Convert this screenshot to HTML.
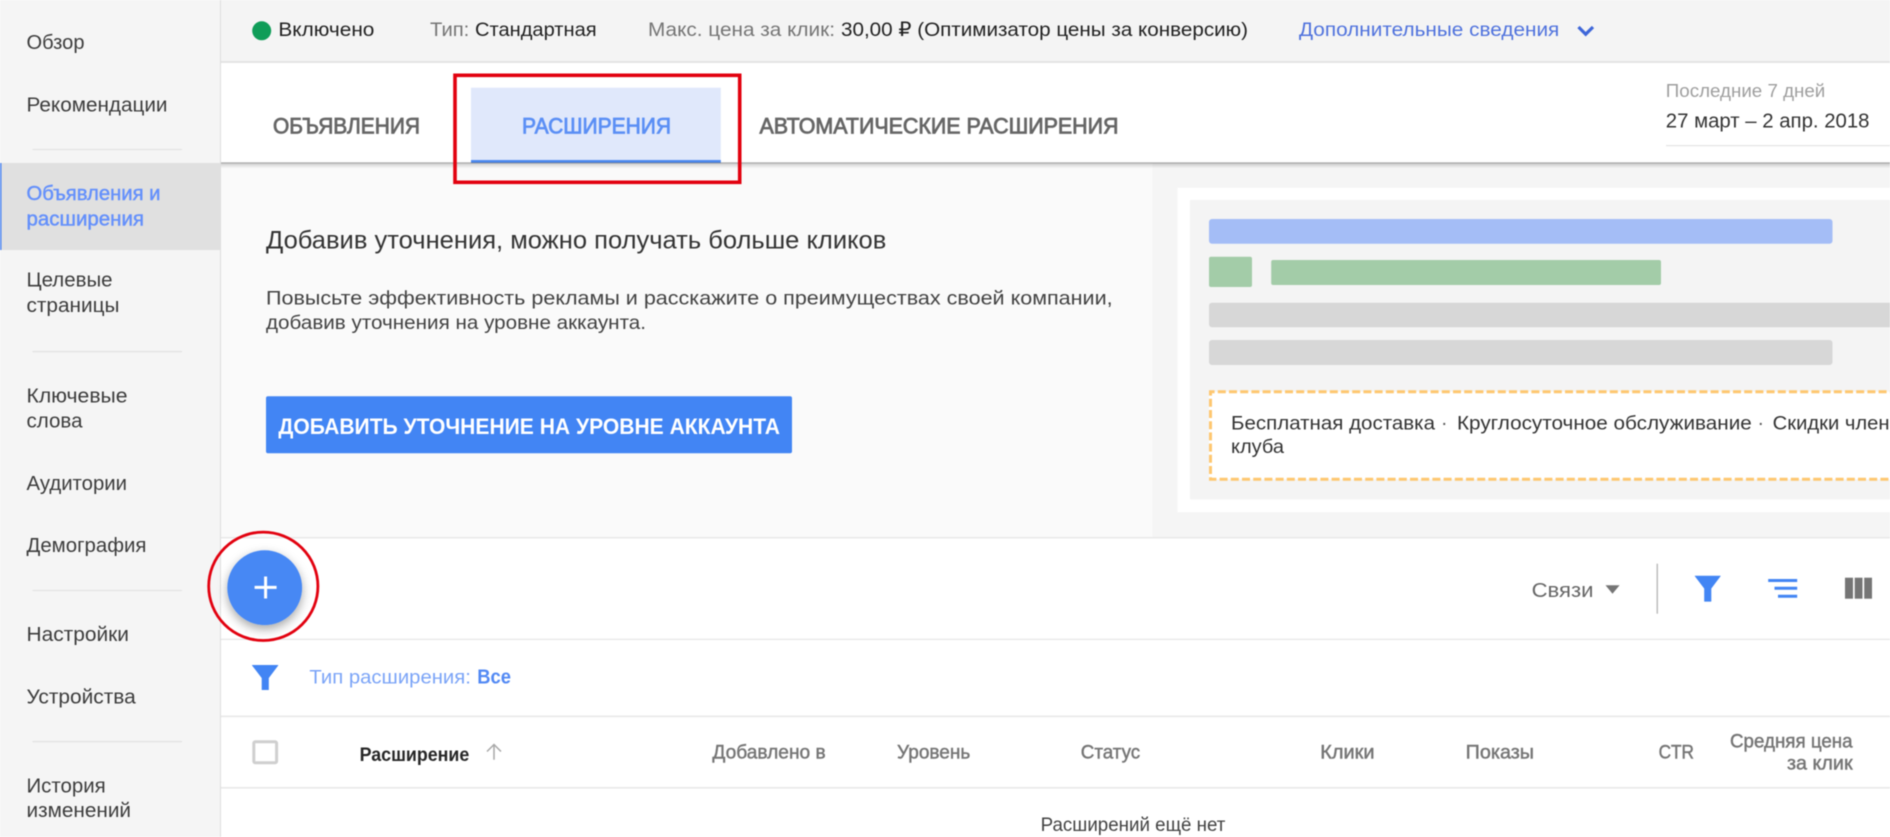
<!DOCTYPE html>
<html lang="ru">
<head>
<meta charset="utf-8">
<title>Расширения</title>
<style>
html,body{margin:0;padding:0;width:1890px;height:837px;overflow:hidden;background:#fff}
svg{display:block;filter:blur(.4px)}
text{font-family:"Liberation Sans","DejaVu Sans",sans-serif;font-size:19.5px;fill:#424242}
.m{stroke-width:.45px}
.nav{font-size:20px;fill:#3c3c3c}
.blue{fill:#6490fb;stroke:#6490fb}
.g{fill:#757575}
.d{fill:#212121}
.tab{font-size:22px;fill:#666;stroke:#666;stroke-width:.8px}
.th{fill:#757575;stroke:#757575}
</style>
</head>
<body>
<svg xmlns="http://www.w3.org/2000/svg" width="1890" height="837" viewBox="0 0 1890 837">
<defs>
<linearGradient id="sh" x1="0" y1="0" x2="0" y2="1"><stop offset="0" stop-color="#000" stop-opacity=".42"/><stop offset=".3" stop-color="#000" stop-opacity=".14"/><stop offset="1" stop-color="#000" stop-opacity="0"/></linearGradient>
<filter id="fab" x="-30%" y="-30%" width="160%" height="170%"><feDropShadow dx="0" dy="4" stdDeviation="5" flood-color="#000" flood-opacity=".35"/></filter>
</defs>

<!-- backgrounds -->
<rect x="0" y="0" width="1890" height="837" fill="#fff"/>
<rect x="0" y="0" width="220" height="837" fill="#f5f5f5"/>
<rect x="220" y="0" width="1" height="837" fill="#dedede"/>
<rect x="221" y="0" width="1669" height="62" fill="#f4f4f4"/>
<rect x="221" y="61" width="1669" height="2" fill="#e4e4e4"/>
<rect x="221" y="163" width="1669" height="375" fill="#fafafa"/>

<!-- sidebar -->
<rect x="0" y="163" width="220" height="87" fill="#e0e0e0"/>
<rect x="0" y="163" width="1.5" height="87" fill="#4d84f0"/>
<g fill="#e0e0e0">
<rect x="32.5" y="149" width="149.5" height="1"/>
<rect x="32.5" y="351" width="149.5" height="1.2"/>
<rect x="32.5" y="590" width="149.5" height="1"/>
<rect x="32.5" y="741" width="149.5" height="1.2"/>
</g>
<text class="nav" x="26.5" y="49" textLength="58" lengthAdjust="spacingAndGlyphs">Обзор</text>
<text class="nav" x="26.5" y="111.5" textLength="141" lengthAdjust="spacingAndGlyphs">Рекомендации</text>
<text class="nav blue m" x="26.5" y="200" textLength="134" lengthAdjust="spacingAndGlyphs">Объявления и</text>
<text class="nav blue m" x="26.5" y="225.3" textLength="117.5" lengthAdjust="spacingAndGlyphs">расширения</text>
<text class="nav" x="26.5" y="286.5" textLength="86" lengthAdjust="spacingAndGlyphs">Целевые</text>
<text class="nav" x="26.5" y="312" textLength="93" lengthAdjust="spacingAndGlyphs">страницы</text>
<text class="nav" x="26.5" y="402.7" textLength="101" lengthAdjust="spacingAndGlyphs">Ключевые</text>
<text class="nav" x="26.5" y="427.7" textLength="56" lengthAdjust="spacingAndGlyphs">слова</text>
<text class="nav" x="26.5" y="490" textLength="100.5" lengthAdjust="spacingAndGlyphs">Аудитории</text>
<text class="nav" x="26.5" y="552" textLength="120" lengthAdjust="spacingAndGlyphs">Демография</text>
<text class="nav" x="26.5" y="641" textLength="102.5" lengthAdjust="spacingAndGlyphs">Настройки</text>
<text class="nav" x="26.5" y="703.7" textLength="109.3" lengthAdjust="spacingAndGlyphs">Устройства</text>
<text class="nav" x="26.5" y="792.3" textLength="79.2" lengthAdjust="spacingAndGlyphs">История</text>
<text class="nav" x="26.5" y="817" textLength="104.5" lengthAdjust="spacingAndGlyphs">изменений</text>

<!-- top bar -->
<circle cx="261.7" cy="30.8" r="9.5" fill="#0f9d58"/>
<text class="d" x="278.4" y="36" textLength="96" lengthAdjust="spacingAndGlyphs">Включено</text>
<text class="g" x="430" y="36" textLength="39.3" lengthAdjust="spacingAndGlyphs">Тип:</text>
<text class="d" x="475" y="36" textLength="121.6" lengthAdjust="spacingAndGlyphs">Стандартная</text>
<text class="g" x="648" y="36" textLength="187" lengthAdjust="spacingAndGlyphs">Макс. цена за клик:</text>
<text class="d" x="841" y="36" textLength="407" lengthAdjust="spacingAndGlyphs">30,00 ₽ (Оптимизатор цены за конверсию)</text>
<text x="1299" y="36" textLength="260.3" lengthAdjust="spacingAndGlyphs" style="fill:#4f72dd">Дополнительные сведения</text>
<path d="M1578.5 27L1585.7 34.2L1593 27" fill="none" stroke="#3f67d9" stroke-width="3.2"/>

<!-- tabs -->
<rect x="471" y="87.7" width="249.8" height="75" fill="#e0e8fb"/>
<rect x="471" y="160" width="249.8" height="2.8" fill="#4d8af0"/>
<text class="tab" x="273" y="133.7" textLength="147" lengthAdjust="spacingAndGlyphs">ОБЪЯВЛЕНИЯ</text>
<text class="tab" x="522" y="133.7" textLength="149" lengthAdjust="spacingAndGlyphs" style="fill:#5b8ff5;stroke:#5b8ff5">РАСШИРЕНИЯ</text>
<text class="tab" x="759.5" y="133.7" textLength="359" lengthAdjust="spacingAndGlyphs">АВТОМАТИЧЕСКИЕ РАСШИРЕНИЯ</text>

<!-- date -->
<text x="1665.8" y="97.2" textLength="159.5" lengthAdjust="spacingAndGlyphs" style="font-size:18px;fill:#9e9e9e">Последние 7 дней</text>
<text x="1665.8" y="127.5" textLength="203.7" lengthAdjust="spacingAndGlyphs" style="font-size:20px;fill:#333">27 март – 2 апр. 2018</text>
<rect x="1666" y="145" width="224" height="1.2" fill="#e4e4e4"/>

<!-- promo left -->
<text x="266" y="248.5" textLength="620.3" lengthAdjust="spacingAndGlyphs" style="font-size:25px;fill:#333">Добавив уточнения, можно получать больше кликов</text>
<text x="266" y="304.5" textLength="846.6" lengthAdjust="spacingAndGlyphs" style="fill:#424242">Повысьте эффективность рекламы и расскажите о преимуществах своей компании,</text>
<text x="266" y="329" textLength="380" lengthAdjust="spacingAndGlyphs" style="fill:#424242">добавив уточнения на уровне аккаунта.</text>
<rect x="266" y="396.3" width="526" height="57" rx="2" fill="#4285f4"/>
<text x="278.4" y="434" textLength="501.6" lengthAdjust="spacingAndGlyphs" style="font-size:22.5px;font-weight:bold;fill:#fff">ДОБАВИТЬ УТОЧНЕНИЕ НА УРОВНЕ АККАУНТА</text>

<!-- promo right -->
<rect x="1152.3" y="163" width="738" height="375" fill="#f5f5f5"/>
<rect x="1177.6" y="187.7" width="713" height="324.6" fill="#fff"/>
<rect x="1190" y="200" width="700" height="299.3" fill="#f4f4f4"/>
<rect x="1209" y="219" width="623.5" height="24.7" rx="3" fill="#a4bdf6"/>
<rect x="1209" y="256.7" width="43" height="30.3" rx="2" fill="#a3cca8"/>
<rect x="1271.2" y="260" width="389.8" height="25" rx="2" fill="#a3cca8"/>
<rect x="1209" y="302.7" width="690" height="24.6" rx="3" fill="#d7d7d7"/>
<rect x="1209" y="340" width="623.5" height="25" rx="3" fill="#d7d7d7"/>
<rect x="1209" y="391.7" width="700" height="87.6" fill="#fff"/>
<path d="M1909 391.7H1210.5V479.3H1909" fill="none" stroke="#fec770" stroke-width="3" stroke-dasharray="8 3.2"/>
<text x="1231" y="429.5" textLength="204" lengthAdjust="spacingAndGlyphs" style="fill:#333">Бесплатная доставка</text>
<text x="1441" y="429.5" style="fill:#555">·</text>
<text x="1457" y="429.5" textLength="294.8" lengthAdjust="spacingAndGlyphs" style="fill:#333">Круглосуточное обслуживание</text>
<text x="1757.5" y="429.5" style="fill:#555">·</text>
<text x="1772.7" y="429.5" textLength="142" lengthAdjust="spacingAndGlyphs" style="fill:#333">Скидки членам</text>
<text x="1231" y="453" textLength="53" lengthAdjust="spacingAndGlyphs" style="fill:#333">клуба</text>

<!-- shadow under tabs -->
<rect x="221" y="162.4" width="1669" height="6" fill="url(#sh)"/>

<!-- divider lines -->
<rect x="221" y="537" width="1669" height="1.4" fill="#e8e8e8"/>
<rect x="221" y="638.8" width="1669" height="1.2" fill="#e6e6e6"/>
<rect x="221" y="715.6" width="1669" height="1.6" fill="#e8e8e8"/>
<rect x="221" y="787" width="1669" height="1.6" fill="#e8e8e8"/>

<!-- FAB -->
<circle cx="264.7" cy="587.7" r="37.4" fill="#4688f4" filter="url(#fab)"/>
<path d="M265.6 576.5V598.5M254.6 587.4H276.6" stroke="#fff" stroke-width="3" fill="none"/>
<ellipse cx="263.3" cy="586.3" rx="54.6" ry="54.2" fill="none" stroke="#e2010f" stroke-width="2.8"/>

<!-- red tab highlight -->
<rect x="455" y="75.3" width="284.7" height="107" fill="none" stroke="#e2010f" stroke-width="3.6"/>

<!-- toolbar -->
<text x="1531.6" y="597" textLength="61.9" lengthAdjust="spacingAndGlyphs" style="font-size:20px;fill:#666">Связи</text>
<path d="M1605.5 585.3H1619.6L1612.5 593.7Z" fill="#757575"/>
<rect x="1656.5" y="563.7" width="1.5" height="50" fill="#bdbdbd"/>
<path d="M1695 576H1720.4L1711 588.5V601.3H1704.5V588.5Z" fill="#4285f4" stroke="#4285f4" stroke-width=".6" stroke-linejoin="round"/>
<path d="M1768.2 580.5H1797.2M1774.5 588.2H1797.2M1778 596.2H1797.2" stroke="#4285f4" stroke-width="3" fill="none"/>
<g fill="#757575"><rect x="1845" y="577.7" width="8" height="21"/><rect x="1854.7" y="577.7" width="7.8" height="21"/><rect x="1864.2" y="577.7" width="7.8" height="21"/></g>

<!-- filter row -->
<path d="M252.3 665.3H278L268.5 678V689.7H262V678Z" fill="#4285f4" stroke="#4285f4" stroke-width=".6" stroke-linejoin="round"/>
<text x="309.4" y="683.5" textLength="161.5" lengthAdjust="spacingAndGlyphs" style="fill:#7ba4f7">Тип расширения:</text>
<text x="477.3" y="683.5" textLength="33.7" lengthAdjust="spacingAndGlyphs" style="font-weight:bold;font-size:20px;fill:#5289f4">Все</text>

<!-- table header -->
<rect x="253.8" y="741.8" width="22.8" height="21" rx="1.5" fill="#fff" stroke="#cfcfcf" stroke-width="3"/>
<text x="359.6" y="761" textLength="109.7" lengthAdjust="spacingAndGlyphs" style="font-weight:bold;fill:#262626">Расширение</text>
<path d="M494 759.7V745M487 751.5L494 744.5L501 751.5" fill="none" stroke="#a8a8a8" stroke-width="1.5"/>
<text class="th m" x="712.4" y="758.5" textLength="113.3" lengthAdjust="spacingAndGlyphs">Добавлено в</text>
<text class="th m" x="897" y="758.5" textLength="73.3" lengthAdjust="spacingAndGlyphs">Уровень</text>
<text class="th m" x="1080.8" y="758.5" textLength="59.4" lengthAdjust="spacingAndGlyphs">Статус</text>
<text class="th m" x="1320.3" y="758.5" textLength="54.2" lengthAdjust="spacingAndGlyphs">Клики</text>
<text class="th m" x="1465.7" y="758.5" textLength="68.3" lengthAdjust="spacingAndGlyphs">Показы</text>
<text class="th m" x="1658.6" y="758.5" textLength="35.4" lengthAdjust="spacingAndGlyphs">CTR</text>
<text class="th m" x="1730" y="747.5" textLength="122.6" lengthAdjust="spacingAndGlyphs">Средняя цена</text>
<text class="th m" x="1787" y="769.5" textLength="65.6" lengthAdjust="spacingAndGlyphs">за клик</text>
<text x="1040.6" y="831" textLength="184.8" lengthAdjust="spacingAndGlyphs" style="fill:#424242">Расширений ещё нет</text>
</svg>
</body>
</html>
